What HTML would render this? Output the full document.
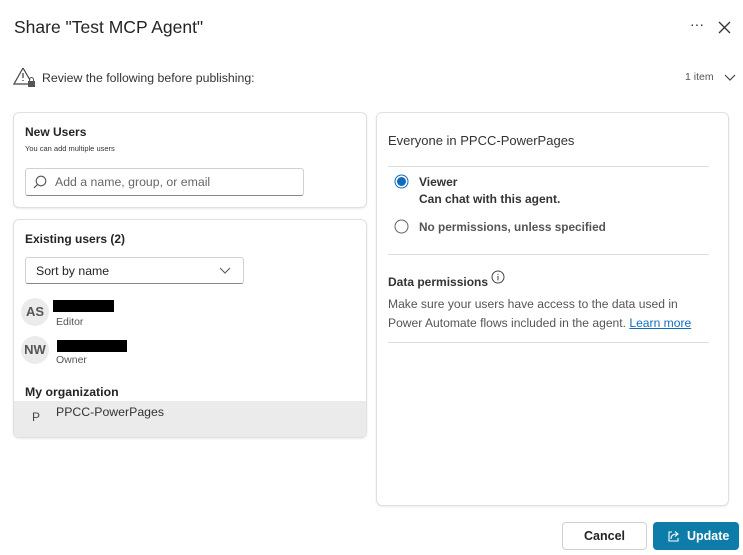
<!DOCTYPE html>
<html><head><style>
body{margin:0;width:743px;height:555px;background:#fff;font-family:"Liberation Sans",sans-serif;color:#242424;position:relative;overflow:hidden}
.a{position:absolute;white-space:nowrap}
.card{position:absolute;border:1px solid #e0e0e0;border-radius:6px;background:#fff;box-shadow:0 1px 2px rgba(0,0,0,.08)}
.hr{position:absolute;height:1px;background:#dcdcdc}
.av{position:absolute;width:28px;height:28px;border-radius:50%;background:#ebebeb;font-size:13px;font-weight:bold;color:#555;text-align:center;line-height:28px}
</style></head><body>
<div class="a" style="left:14px;top:17px;font-size:17.5px">Share "Test MCP Agent"</div>
<div class="a" style="left:690px;top:16px;font-size:14px;letter-spacing:0px">···</div>
<svg class="a" style="left:718px;top:21px" width="13" height="13"><path d="M1 1L12 12M12 1L1 12" stroke="#333" stroke-width="1.3"/></svg>
<svg class="a" style="left:13px;top:66px" width="24" height="22"><path d="M10 2L1 18H17" fill="none" stroke="#444" stroke-width="1.2"/><path d="M10 2L17 14" stroke="#444" stroke-width="1.2"/><path d="M10 7V12M10 14V15" stroke="#444" stroke-width="1.3"/><rect x="15" y="15" width="7" height="6" fill="#555"/><path d="M16.5 15V13.5A2 2 0 0 1 20.5 13.5V15" fill="none" stroke="#555"/></svg>
<div class="a" style="left:42px;top:71px;font-size:12.3px;color:#333">Review the following before publishing:</div>
<div class="a" style="left:685px;top:71px;font-size:10.5px;color:#555">1 item</div>
<svg class="a" style="left:724px;top:74px" width="12" height="8"><path d="M1 1L6 6L11 1" fill="none" stroke="#444" stroke-width="1.2"/></svg>

<div class="card" style="left:13px;top:112px;width:352px;height:94px"></div>
<div class="a" style="left:25px;top:125px;font-size:12px;font-weight:bold">New Users</div>
<div class="a" style="left:25px;top:144px;font-size:7.5px;color:#333">You can add multiple users</div>
<div class="a" style="left:25px;top:168px;width:277px;height:26px;border:1px solid #d1d1d1;border-bottom-color:#888;border-radius:3px"></div>
<svg class="a" style="left:33px;top:175px" width="14" height="14"><circle cx="8" cy="6" r="4.8" fill="none" stroke="#555" stroke-width="1.1"/><path d="M4.5 9.5L1 13" stroke="#555" stroke-width="1.2"/></svg>
<div class="a" style="left:55px;top:175px;font-size:12.3px;color:#666">Add a name, group, or email</div>

<div class="card" style="left:13px;top:219px;width:352px;height:217px;overflow:hidden">
<div style="position:absolute;left:0;top:181px;width:352px;height:36px;background:#ebebeb"></div></div>
<div class="a" style="left:25px;top:232px;font-size:12px;font-weight:bold">Existing users (2)</div>
<div class="a" style="left:25px;top:257px;width:217px;height:25px;border:1px solid #d1d1d1;border-bottom-color:#888;border-radius:3px"></div>
<div class="a" style="left:36px;top:264px;font-size:12.3px">Sort by name</div>
<svg class="a" style="left:219px;top:267px" width="12" height="7"><path d="M1 1L6 6L11 1" fill="none" stroke="#555"/></svg>
<div class="av" style="left:21px;top:298px">AS</div>
<div class="a" style="left:53px;top:300px;width:61px;height:12px;background:#000"></div>
<div class="a" style="left:56px;top:316px;font-size:10.5px;color:#555">Editor</div>
<div class="av" style="left:21px;top:336px">NW</div>
<div class="a" style="left:57px;top:340px;width:70px;height:12px;background:#000"></div>
<div class="a" style="left:56px;top:354px;font-size:10.5px;color:#555">Owner</div>
<div class="a" style="left:25px;top:385px;font-size:12.3px;font-weight:bold">My organization</div>
<div class="a" style="left:32px;top:410px;font-size:12px;color:#444">P</div>
<div class="a" style="left:56px;top:405px;font-size:12.3px;color:#333">PPCC-PowerPages</div>

<div class="card" style="left:376px;top:112px;width:351px;height:392px"></div>
<div class="a" style="left:388px;top:133px;font-size:13px;color:#333">Everyone in PPCC-PowerPages</div>
<div class="hr" style="left:388px;top:166px;width:321px"></div>
<svg class="a" style="left:394px;top:174px" width="15" height="15"><circle cx="7.5" cy="7.5" r="6.5" fill="none" stroke="#0f6cbd" stroke-width="1"/><circle cx="7.5" cy="7.5" r="4.5" fill="#0f6cbd"/></svg>
<div class="a" style="left:419px;top:175px;font-size:12px;font-weight:bold;color:#333">Viewer</div>
<div class="a" style="left:419px;top:192px;font-size:12px;font-weight:bold;color:#333">Can chat with this agent.</div>
<svg class="a" style="left:394px;top:219px" width="15" height="15"><circle cx="7.5" cy="7.5" r="6.5" fill="none" stroke="#666" stroke-width="1"/></svg>
<div class="a" style="left:419px;top:220px;font-size:11.8px;font-weight:bold;color:#555">No permissions, unless specified</div>
<div class="hr" style="left:388px;top:254px;width:321px"></div>
<div class="a" style="left:388px;top:275px;font-size:12px;font-weight:bold;color:#333">Data permissions</div>
<svg class="a" style="left:491px;top:270px" width="14" height="14"><circle cx="7" cy="7" r="6" fill="none" stroke="#444"/><path d="M7 6V10.5M7 3.8V4.8" stroke="#444"/></svg>
<div class="a" style="left:388px;top:295px;font-size:12.1px;color:#555;line-height:19px">Make sure your users have access to the data used in<br>Power Automate flows included in the agent. <span style="color:#0f6cbd;text-decoration:underline">Learn more</span></div>
<div class="hr" style="left:388px;top:342px;width:321px"></div>

<div class="a" style="left:562px;top:522px;width:83px;height:26px;border:1px solid #d1d1d1;border-radius:4px;font-size:12.5px;font-weight:bold;text-align:center;line-height:26px">Cancel</div>
<div class="a" style="left:653px;top:522px;width:86px;height:28px;background:#0e7ca8;border-radius:4px;color:#fff;font-size:12.5px;font-weight:bold;line-height:28px"><svg style="position:absolute;left:13px;top:7px" width="14" height="14"><path d="M6 3H3V12H12V9" fill="none" stroke="#fff" stroke-width="1.1"/><path d="M5 10C5 6 8 5 11 5M9 2.5L12 5L9 7.5" fill="none" stroke="#fff" stroke-width="1.1"/></svg><span style="position:absolute;left:34px">Update</span></div>
</body></html>
